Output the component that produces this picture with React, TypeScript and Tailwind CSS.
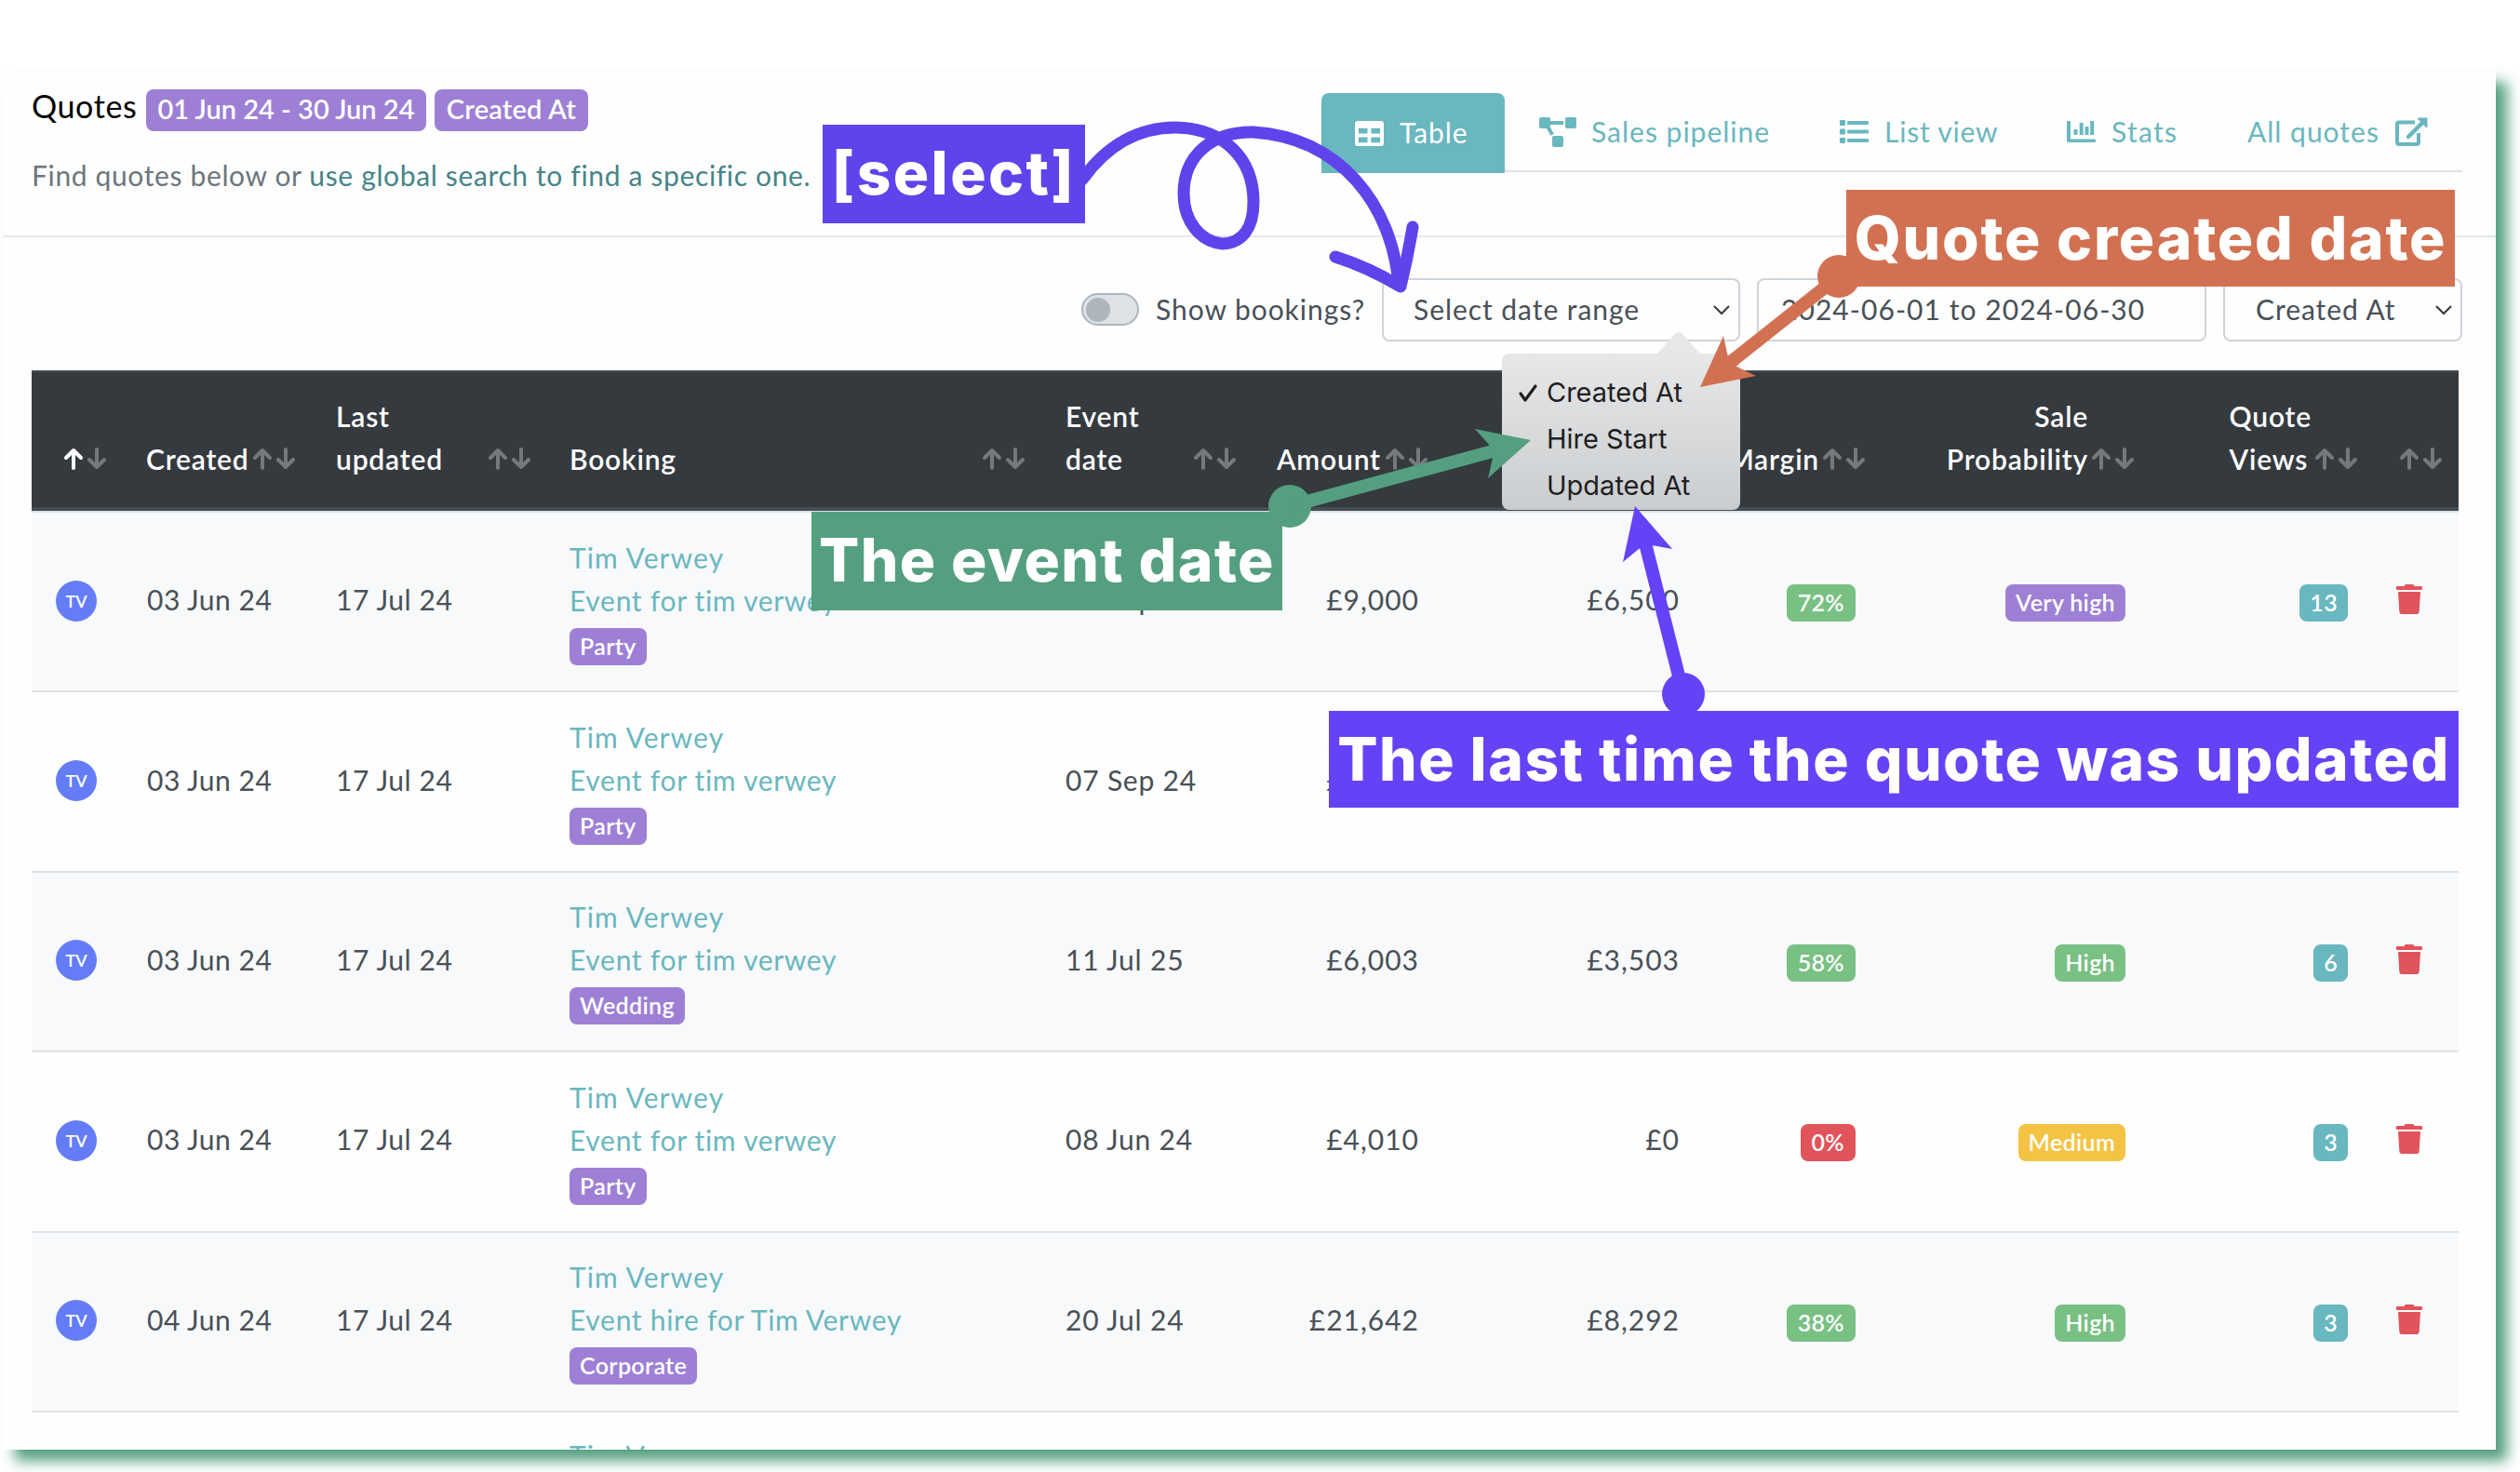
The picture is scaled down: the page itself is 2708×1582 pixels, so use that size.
import { FaTable, FaProjectDiagram, FaTrash } from "react-icons/fa";

type Quote = {
    created: string;
    event: string;
    type: string;
    eventDate: string;
    amount: string;
    profit?: string;
    margin?: string;
    probability?: string;
    views?: string;
};

const quotes: Quote[] = [
    { created: "03 Jun 24", event: "Event for tim verwey", type: "Party", eventDate: "07 Sep 24", amount: "£9,000", profit: "£6,500", margin: "72%", probability: "Very high", views: "13" },
    { created: "03 Jun 24", event: "Event for tim verwey", type: "Party", eventDate: "07 Sep 24", amount: "£9,000" },
    { created: "03 Jun 24", event: "Event for tim verwey", type: "Wedding", eventDate: "11 Jul 25", amount: "£6,003", profit: "£3,503", margin: "58%", probability: "High", views: "6" },
    { created: "03 Jun 24", event: "Event for tim verwey", type: "Party", eventDate: "08 Jun 24", amount: "£4,010", profit: "£0", margin: "0%", probability: "Medium", views: "3" },
    { created: "04 Jun 24", event: "Event hire for Tim Verwey", type: "Corporate", eventDate: "20 Jul 24", amount: "£21,642", profit: "£8,292", margin: "38%", probability: "High", views: "3" },
];

const probabilityColors: Record<string, string> = {
    "Very high": "bg-[#9d80d5]",
    High: "bg-[#79c083]",
    Medium: "bg-[#f4c343]",
};

const columns = "grid grid-cols-[94px_203px_253px_531px_227px_206px_280px_190px_289px_240px_95px]";

function Badge({ color, children }: { color: string; children: string }) {
    return (
        <span className={`inline-block h-10 rounded-lg px-[11px] text-[25px] leading-[38px] font-semibold tracking-[0.35px] text-white ${color}`}>
            {children}
        </span>
    );
}

function Sort({ active = false }: { active?: boolean }) {
    return (
        <svg className="mb-[11px] h-[24px] w-[46px] shrink-0" viewBox="0 0 46 24" fill="none" strokeWidth="4" strokeLinecap="round" strokeLinejoin="round">
            <path d="M11 22V3M3 11l8-8 8 8" stroke={active ? "#fff" : "#75797d"} />
            <path d="M36 2v19M28 13l8 8 8-8" stroke="#75797d" />
        </svg>
    );
}

function Chevron() {
    return (
        <svg className="h-3 w-[18px] shrink-0" viewBox="0 0 18 12" fill="none" stroke="#343a40" strokeWidth="2">
            <path d="M1 2l8 8 8-8" />
        </svg>
    );
}

function ListIcon() {
    return (
        <svg className="h-[25px] w-[31px]" viewBox="0 0 31 25" fill="currentColor">
            <rect width="6" height="6" rx="1" />
            <rect y="9.5" width="6" height="6" rx="1" />
            <rect y="19" width="6" height="6" rx="1" />
            <rect x="8" y="1" width="23" height="4" rx="1" />
            <rect x="8" y="10.5" width="23" height="4" rx="1" />
            <rect x="8" y="20" width="23" height="4" rx="1" />
        </svg>
    );
}

function StatsIcon() {
    return (
        <svg className="h-[23px] w-[31px]" viewBox="0 0 31 23" fill="currentColor">
            <path d="M1 0h2q1 0 1 1v18.500h26q1 0 1 1V22q0 1-1 1H2q-2 0-2-2V1q0-1 1-1z" />
            <rect x="7.500" y="9" width="4" height="6" rx=".5" />
            <rect x="13.700" y="2" width="4" height="13" rx=".5" />
            <rect x="19.500" y="6" width="4" height="9" rx=".5" />
            <rect x="25.200" y="0" width="4" height="15" rx=".5" />
        </svg>
    );
}

function ExternalIcon() {
    return (
        <svg className="h-8 w-[35px]" viewBox="0 0 35 32" fill="none" stroke="currentColor" strokeWidth="4" strokeLinejoin="round">
            <path d="M21 5.500H4q-2 0-2 2V27q0 2 2 2h19q2 0 2-2V17" />
            <path d="M14 21L30 5" strokeWidth="4.500" strokeLinecap="round" />
            <path d="M25 1.500h8.500V10z" fill="currentColor" strokeWidth="2" />
        </svg>
    );
}

function Header() {
    return (
        <header className="flex h-[179px] items-start justify-between border-b-2 border-[#e4e9f0] pr-9 pl-[30px]">
            <div>
                <div className="flex h-[65px] items-end gap-[9px]">
                    <h1 className="mb-0.5 w-[114px] text-[34px] leading-[50px] tracking-[0.6px] text-black">Quotes</h1>
                    <span className="h-[45px] w-[301px] rounded-lg bg-[#9d80d5] text-center text-[29px] leading-[42px] font-semibold text-white">01 Jun 24 - 30 Jun 24</span>
                    <span className="h-[45px] w-[165px] rounded-lg bg-[#9d80d5] text-center text-[29px] leading-[42px] font-semibold tracking-[0.2px] text-white">Created At</span>
                </div>
                <p className="mt-6 text-[30px] leading-[46px] tracking-[0.64px] whitespace-nowrap text-[#6c757d]">
                    Find quotes below or <a className="text-[#458488]">use global search to find a specific one.</a>
                </p>
            </div>
            <nav className="mt-6 flex h-[86px] w-[1226px] text-[30px] leading-[46px] tracking-[1px] text-[#69b7bf]">
                <a className="flex w-[197px] items-center gap-[17px] rounded-t-lg bg-[#69b7bf] pl-9 text-white">
                    <FaTable className="size-[31px]" />
                    <span className="mb-[3px] tracking-[0.9px]">Table</span>
                </a>
                <div className="flex h-[85px] flex-1 items-center border-b-2 border-[#dee2e6] [&_span]:mb-px">
                    <a className="flex w-[324px] items-center gap-4 pl-[37px]">
                        <FaProjectDiagram className="h-8 w-10" />
                        <span>Sales pipeline</span>
                    </a>
                    <a className="flex w-[243px] items-center gap-[17px] pl-9">
                        <ListIcon />
                        <span className="tracking-[0.8px]">List view</span>
                    </a>
                    <a className="flex w-[195px] items-center gap-[17px] pl-[37px]">
                        <StatsIcon />
                        <span className="tracking-[1.3px]">Stats</span>
                    </a>
                    <a className="flex items-center gap-[17px] pl-9">
                        <span>All quotes</span>
                        <ExternalIcon />
                    </a>
                </div>
            </nav>
        </header>
    );
}

function Filters() {
    return (
        <div className="flex h-[143px] items-start justify-end pt-11 pr-9 text-[30px] leading-[62px] tracking-[0.95px] whitespace-nowrap text-[#495057]">
            <span className="mt-4 mr-[18px] flex h-[35px] w-[62px] items-center rounded-full border-2 border-[#adb5bd] bg-[#dee2e6] pl-[3px]">
                <span className="size-[26px] rounded-full bg-[#adb5bd]" />
            </span>
            <span className="w-[243px] pt-0.5">Show bookings?</span>
            <div className="flex h-[68px] w-[385px] items-start justify-between rounded-lg border-2 border-[#ced4da] pr-[9px] pl-8">
                Select date range
                <span className="flex h-16 items-center"><Chevron /></span>
            </div>
            <div className="ml-[18px] h-[68px] w-[483px] rounded-lg border-2 border-[#ced4da] pl-6 tracking-[1.05px]">2024-06-01 to 2024-06-30</div>
            <div className="ml-[18px] flex h-[68px] w-[257px] items-start justify-between rounded-lg border-2 border-[#ced4da] pr-[9px] pl-[33px]">
                Created At
                <span className="flex h-16 items-center"><Chevron /></span>
            </div>
        </div>
    );
}

function TableHead() {
    return (
        <div className={`${columns} h-[151px] items-end border-t-2 border-b-4 border-[#454d55] bg-[#353a3f] pb-[29px] text-[30px] leading-[46px] font-semibold tracking-[0.8px] text-white [&>div]:flex [&>div]:items-end [&>div]:pr-[14px]`}>
            <div className="justify-end"><Sort active /></div>
            <div className="justify-between pl-[29px]">Created<Sort /></div>
            <div className="justify-between pl-[30px]">Last<br />updated<Sort /></div>
            <div className="justify-between pl-[28px]">Booking<Sort /></div>
            <div className="justify-between pl-[30px]">Event<br />date<Sort /></div>
            <div className="justify-between pl-[30px]">Amount<Sort /></div>
            <div />
            <div className="justify-end gap-[3px]">Margin<Sort /></div>
            <div className="justify-end gap-[3px] text-right"><span>Sale<br />Probability</span><Sort /></div>
            <div className="justify-end gap-[3px]"><span>Quote<br />Views</span><Sort /></div>
            <div className="justify-end !pr-[18px]"><Sort /></div>
        </div>
    );
}

function Row({ quote, striped }: { quote: Quote; striped: boolean }) {
    return (
        <div className={`${columns} h-[193.4px] items-center border-t-2 border-[#dee2e6] text-[30px] leading-[46px] whitespace-nowrap text-[#495057] ${striped ? "bg-[#f8f9fb]" : "bg-[#fefefe]"}`}>
            <span className="mb-0.5 ml-[26px] flex size-11 items-center justify-center rounded-full bg-[#647df7] text-[18px] font-semibold text-white">TV</span>
            <span className="pb-[5px] pl-[30px] tracking-[0.5px]">{quote.created}</span>
            <span className="pb-[5px] pl-[30px] tracking-[0.6px]">17 Jul 24</span>
            <div className="flex flex-col items-start pb-[3px] pl-[28px] tracking-[0.7px] text-[#69b7bf]">
                <a className="tracking-[1.1px]">Tim Verwey</a>
                <a className="mb-[7px]">{quote.event}</a>
                <Badge color="bg-[#9d80d5]">{quote.type}</Badge>
            </div>
            <span className="pb-[5px] pl-[30px] tracking-[0.8px]">{quote.eventDate}</span>
            <span className="pr-[23px] pb-[5px] text-right tracking-[1px]">{quote.amount}</span>
            <span className="pr-[23px] pb-[5px] text-right tracking-[1px]">{quote.profit}</span>
            <div className="flex justify-end pt-[3px] pr-6">
                {quote.margin && <Badge color={quote.margin === "0%" ? "bg-[#e1545b] !px-3" : "bg-[#79c083] !px-3"}>{quote.margin}</Badge>}
            </div>
            <div className="flex justify-end pt-[3px] pr-[23px]">
                {quote.probability && <Badge color={probabilityColors[quote.probability]}>{quote.probability}</Badge>}
            </div>
            <div className="flex justify-end pt-[3px] pr-6">
                {quote.views && <Badge color="bg-[#69b7bf]">{quote.views}</Badge>}
            </div>
            <FaTrash className="mb-[5px] ml-7 h-8 w-7 text-[#e1545b]" />
        </div>
    );
}

function SortMenu() {
    return (
        <div className="absolute top-[380px] left-[1614px] h-[168px] w-64 rounded-lg bg-linear-to-b from-[#e7e7e7] to-[#cacdd0] pt-[17px] font-['Inter'] text-[29px] leading-[50px] text-[#1f2021]">
            <svg className="absolute -top-6 left-[166px] h-6 w-12" viewBox="0 0 48 24">
                <path d="M1 24L20 3q4-5 8 0L47 24z" fill="#e7e7e7" />
            </svg>
            <div className="flex items-center pl-[17px]">
                <svg className="mr-[9px] h-[22px] w-[22px]" viewBox="0 0 22 22" fill="none" stroke="#1f2021" strokeWidth="3.2" strokeLinecap="round" strokeLinejoin="round">
                    <path d="M3 12l5 7L19 4" />
                </svg>
                Created At
            </div>
            <div className="pl-[48px]">Hire Start</div>
            <div className="pl-[48px]">Updated At</div>
        </div>
    );
}

function Annotations() {
    return (
        <div className="absolute inset-0 font-['Inter'] text-[64px] font-extrabold whitespace-nowrap text-white">
            <div className="absolute top-[134px] left-[884px] h-[106px] w-[282px] bg-[#5f44eb] text-center leading-[104px] tracking-[2.4px]">[select]</div>
            <div className="absolute top-[204px] left-[1984px] h-[104px] w-[654px] bg-[#d27151] text-center leading-[104px] tracking-[1.8px]">Quote created date</div>
            <div className="absolute top-[550px] left-[872px] h-[106px] w-[506px] bg-[#549f7f] text-center leading-[104px] tracking-[1.4px]">The event date</div>
            <div className="absolute top-[764px] left-[1428px] h-[104px] w-[1214px] bg-[#6642f7] text-center leading-[104px] tracking-[1.5px]">The last time the quote was updated</div>
            <svg className="absolute inset-0 h-full w-full" viewBox="0 0 2708 1582" fill="none">
                {/* loop from the select label to the date range field */}
                <g stroke="#5f44eb" strokeWidth="13" strokeLinecap="round" strokeLinejoin="round">
                    <path d="M1163 193C1190 155 1225 137 1263 137C1315 138 1347 170 1347 217C1347 245 1335 261 1314 262C1290 260 1272 238 1272 208C1272 165 1305 141 1347 142C1440 148 1496 220 1503 306" />
                    <path d="M1435 276Q1470 287 1505 308Q1513 275 1518 244" />
                </g>
                <g stroke="#549f7f" fill="#549f7f">
                    <circle cx="1386" cy="544" r="23" stroke="none" />
                    <path d="M1386 544L1604 485" strokeWidth="14" />
                    <path d="M1645 473L1585 461L1601 479L1604 492L1599 514Z" stroke="none" />
                </g>
                <g stroke="#d27151" fill="#d27151">
                    <circle cx="1976" cy="297" r="23" stroke="none" />
                    <path d="M1976 297L1860 389" strokeWidth="14" />
                    <path d="M1827 416L1852 361L1857 384L1866 394L1887 404Z" stroke="none" />
                </g>
                <g stroke="#6642f7" fill="#6642f7">
                    <circle cx="1809" cy="746" r="23" stroke="none" />
                    <path d="M1809 746L1768 584" strokeWidth="14" />
                    <path d="M1757 544L1797 590L1775 586L1761 590L1744 604Z" stroke="none" />
                </g>
            </svg>
        </div>
    );
}

export default function App() {
    return (
        <div className="relative h-[1582px] w-[2708px] overflow-hidden bg-white pt-[76px] pl-1 font-['Lato',sans-serif]">
            <main className="h-[1482px] w-[2678px] overflow-hidden bg-[#fefefe] shadow-[12px_12px_14px_#549f7f]">
                <Header />
                <Filters />
                <div className="ml-[30px] w-[2608px]">
                    <TableHead />
                    {quotes.map((quote, i) => (
                        <Row key={i} quote={quote} striped={i % 2 === 0} />
                    ))}
                    <div className="border-t-2 border-[#dee2e6] pt-[23px] pl-[578px] text-[30px] leading-[46px] tracking-[1.1px] text-[#69b7bf]">Tim Verwey</div>
                </div>
            </main>
            <SortMenu />
            <Annotations />
        </div>
    );
}
